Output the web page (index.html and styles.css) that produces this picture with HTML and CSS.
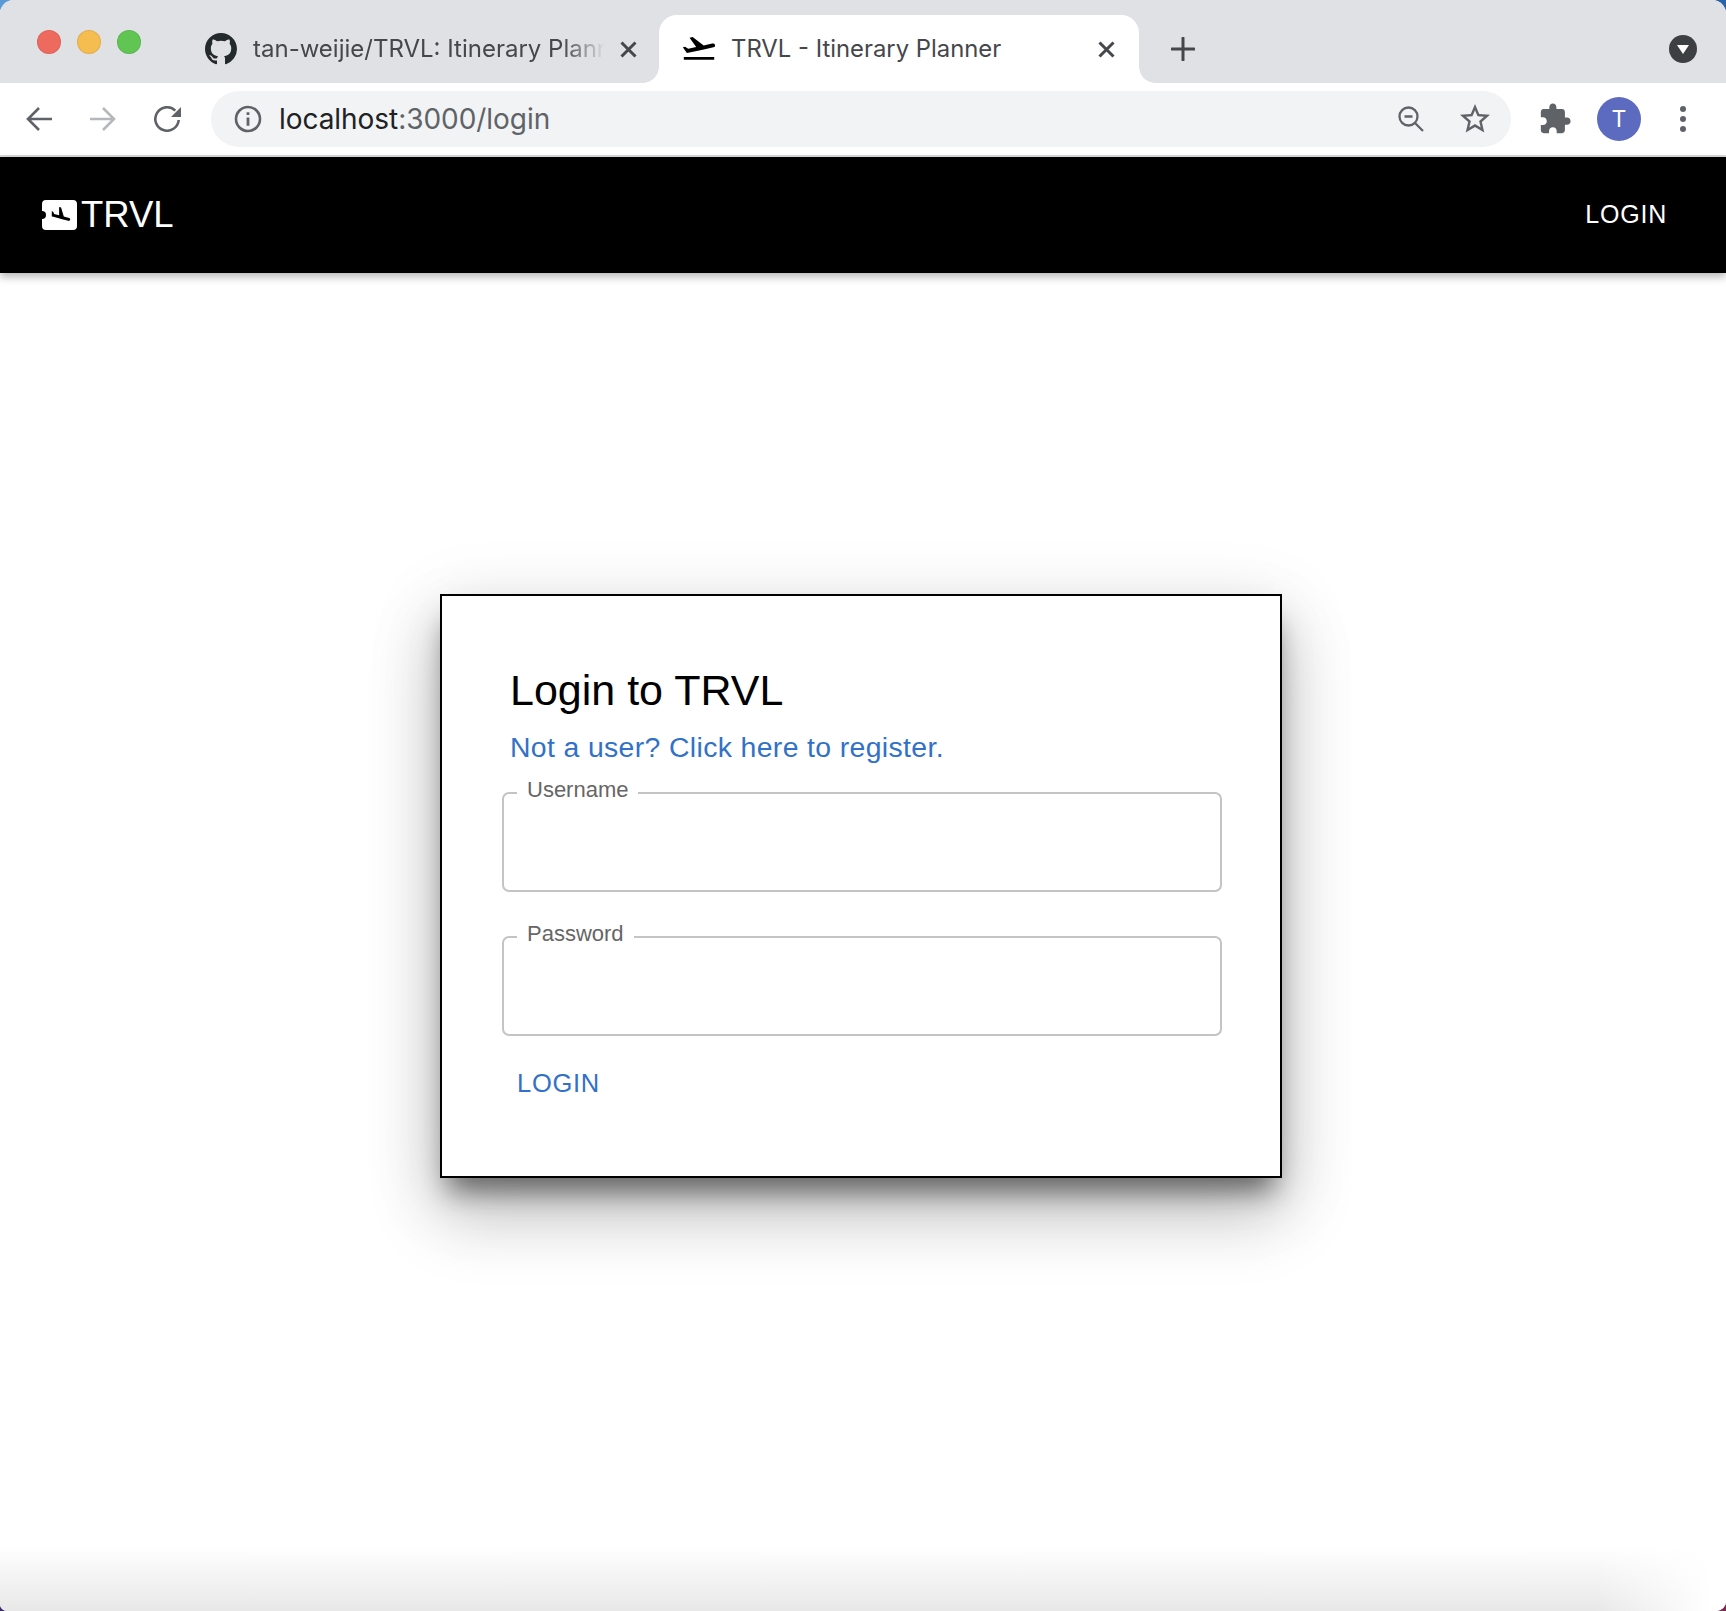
FILE: index.html
```html
<!DOCTYPE html>
<html lang="en">
<head>
  <meta charset="UTF-8" />
  <title>TRVL - Itinerary Planner</title>
  <link rel="stylesheet" href="styles.css">
</head>
<body>

  <div class="window">

    <div class="tab-strip">
      <div class="lights">
        <span class="light red"></span>
        <span class="light yellow"></span>
        <span class="light green"></span>
      </div>

      <div class="tab">
        <svg class="favicon-gh" viewBox="0 0 16 16"><path d="M8 0C3.58 0 0 3.58 0 8c0 3.54 2.29 6.53 5.47 7.59.4.07.55-.17.55-.38 0-.19-.01-.82-.01-1.49-2.01.37-2.53-.49-2.69-.94-.09-.23-.48-.94-.82-1.13-.28-.15-.68-.52-.01-.53.63-.01 1.08.58 1.23.82.72 1.21 1.87.87 2.33.66.07-.52.28-.87.51-1.07-1.78-.2-3.64-.89-3.64-3.95 0-.87.31-1.59.82-2.15-.08-.2-.36-1.02.08-2.12 0 0 .67-.21 2.2.82.64-.18 1.32-.27 2-.27.68 0 1.36.09 2 .27 1.53-1.04 2.2-.82 2.2-.82.44 1.1.16 1.92.08 2.12.51.56.82 1.27.82 2.15 0 3.07-1.87 3.75-3.65 3.95.29.25.54.73.54 1.48 0 1.07-.01 1.93-.01 2.2 0 .21.15.46.55.38A8.013 8.013 0 0016 8c0-4.42-3.58-8-8-8z"/></svg>
        <span class="tab-title fade">tan-weijie/TRVL: Itinerary Planner</span>
        <svg class="tab-close" viewBox="0 0 17 17"><path d="M1.5 1.5l14 14M15.5 1.5l-14 14"/></svg>
      </div>

      <div class="tab active">
        <svg class="favicon-plane" viewBox="2 2 20 20" preserveAspectRatio="none"><path d="M2.5 19h19v2h-19zm19.57-9.36c-.21-.8-1.04-1.28-1.84-1.06L14.92 10l-6.9-6.43-1.93.51 4.14 7.17-4.97 1.33-1.97-1.54-1.45.39 1.82 3.16.77 1.33 1.6-.43 5.31-1.42 4.35-1.16L21 11.49c.81-.23 1.28-1.05 1.07-1.85z"/></svg>
        <span class="tab-title">TRVL - Itinerary Planner</span>
        <svg class="tab-close" viewBox="0 0 17 17"><path d="M1.5 1.5l14 14M15.5 1.5l-14 14"/></svg>
      </div>

      <svg class="new-tab" viewBox="0 0 24 24"><path d="M12 1v22M1 12h22"/></svg>

      <div class="tab-search">
        <svg viewBox="0 0 28 28"><circle cx="14" cy="14" r="14"/><path class="tri" d="M8 10h12l-6 9z"/></svg>
      </div>
    </div>

    <div class="toolbar">
      <svg class="nav-arrow" viewBox="0 0 26 24"><path d="M26 12H2M13 1L2 12l11 11"/></svg>
      <svg class="nav-arrow" viewBox="0 0 26 24"><path class="off" d="M0 12h24M13 1l11 11-11 11"/></svg>
      <svg class="reload" viewBox="0 0 28 26"><path class="reload-arc" d="M21.3 4.7A11.7 11.7 0 1 0 24.7 14"/><path class="reload-head" d="M27 1v10H17z"/></svg>

      <div class="omnibox">
        <svg class="info" viewBox="0 0 28 28"><circle class="ring" cx="14" cy="14" r="12"/><path d="M12.6 12.4h2.8v8.4h-2.8zM12.6 7.2h2.8V10h-2.8z"/></svg>
        <span class="url">localhost<span class="url-dim">:3000/login</span></span>
        <svg class="omni-zoom" viewBox="0 0 26 26"><circle cx="10.5" cy="10.5" r="9"/><path d="M6.5 10.5h8M17 17l8 8"/></svg>
        <svg class="omni-star" viewBox="0 0 24 24"><path d="M22 9.24l-7.19-.62L12 2 9.19 8.63 2 9.24l5.46 4.73L5.82 21 12 17.27 18.18 21l-1.63-7.03L22 9.24zM12 15.4l-3.76 2.27 1-4.28-3.32-2.88 4.38-.38L12 6.1l1.71 4.04 4.38.38-3.32 2.88 1 4.28L12 15.4z"/></svg>
      </div>

      <svg class="puzzle" viewBox="0 0 24 24"><path d="M20.5 11H19V7c0-1.1-.9-2-2-2h-4V3.5C13 2.12 11.88 1 10.5 1S8 2.12 8 3.5V5H4c-1.1 0-1.99.9-1.99 2v3.8H3.5c1.49 0 2.7 1.21 2.7 2.7s-1.21 2.7-2.7 2.7H2V20c0 1.1.9 2 2 2h3.8v-1.5c0-1.49 1.21-2.7 2.7-2.7 1.49 0 2.7 1.21 2.7 2.7V22H17c1.1 0 2-.9 2-2v-4h1.5c1.38 0 2.5-1.12 2.5-2.5S21.88 11 20.5 11z"/></svg>
      <div class="avatar">T</div>
      <div class="menu-dots"><span></span><span></span><span></span></div>
    </div>

    <header class="app-bar">
      <a class="brand" href="#">
        <svg class="brand-icon" viewBox="0 0 35 30">
          <path class="ticket" d="M4 0h27a4 4 0 0 1 4 4v22a4 4 0 0 1-4 4H4a4 4 0 0 1-4-4v-7a4 4 0 0 0 0-8V4a4 4 0 0 1 4-4z"/>
          <path class="ticket-plane" transform="translate(7 5)" d="M9.68 13.27l4.35 1.16 5.31 1.42c.8.21 1.62-.26 1.84-1.06.21-.8-.26-1.62-1.06-1.84l-5.31-1.42-2.76-9.02L10.12 2v8.28L5.15 8.95l-.93-2.32-1.45-.39v5.17l1.6.43 5.31 1.43z"/>
        </svg>
        <span class="brand-name">TRVL</span>
      </a>
      <a class="bar-login" href="#">LOGIN</a>
    </header>

    <main class="content">
      <form class="login-card">
        <h1 class="login-title">Login to TRVL</h1>
        <a class="register-link" href="#">Not a user? Click here to register.</a>

        <div class="field">
          <label class="field-label" for="username">Username</label>
          <input class="field-input" type="text" id="username" />
        </div>

        <div class="field">
          <label class="field-label" for="password">Password</label>
          <input class="field-input" type="password" id="password" />
        </div>

        <button class="login-btn" type="button">LOGIN</button>
      </form>
    </main>

  </div>

</body>
</html>
```

FILE: styles.css
```css
:root {
  --strip: #dfe1e5;
  --omni: #f1f3f4;
  --icon: #5f6368;
  --tab-text: #45474b;
  --blue: #3271c8;
}

* {
  box-sizing: border-box;
}

body {
  margin: 0;
  width: 1726px;
  height: 1611px;
  overflow: hidden;
  background:
    linear-gradient(to right, #5b9bd5 50%, #2a64a8 50%) top / 100% 50% no-repeat,
    linear-gradient(to right, #3a2a6a 50%, #7b2a50 50%) bottom / 100% 50% no-repeat;
  font-family: "Liberation Sans", Arial, sans-serif;
}

.window {
  height: 100%;
  display: flex;
  flex-direction: column;
  overflow: hidden;
  border-radius: 14px 14px 10px 7px;
  background: #fff;
}

/* browser chrome */

.tab-strip {
  flex: none;
  height: 83px;
  display: flex;
  align-items: flex-start;
  background: var(--strip);
  font-family: Inter, "Liberation Sans", sans-serif;
}

.lights {
  display: flex;
  gap: 16px;
  margin: 30px 0 0 37px;
}

.light {
  width: 24px;
  height: 24px;
  border-radius: 50%;
  box-shadow: inset 0 0 0 1px rgba(0, 0, 0, 0.08);
}

.red { background: #ee6a5f; }
.yellow { background: #f5bd4f; }
.green { background: #61c554; }

.tab {
  position: relative;
  width: 454px;
  height: 68px;
  margin: 15px 0 0 64px;
  display: flex;
  align-items: center;
  gap: 16px;
  padding-right: 19px;
}

.tab.active {
  width: 480px;
  margin-left: 0;
  padding: 0 21px 0 24px;
  background: #fff;
  border-radius: 18px 18px 0 0;
}

.tab.active::before,
.tab.active::after {
  content: "";
  position: absolute;
  bottom: 0;
  width: 16px;
  height: 16px;
}

.tab.active::before {
  left: -16px;
  background: radial-gradient(circle at 0 0, transparent 15.5px, #fff 16px);
}

.tab.active::after {
  right: -16px;
  background: radial-gradient(circle at 100% 0, transparent 15.5px, #fff 16px);
}

.favicon-gh {
  flex: none;
  width: 32px;
  height: 32px;
  fill: #24292e;
}

.favicon-plane {
  flex: none;
  width: 32px;
  height: 26px;
  margin-top: -3px;
  fill: #000;
}

.tab-title {
  flex: 1;
  overflow: hidden;
  white-space: nowrap;
  font-size: 24px;
  color: var(--tab-text);
  margin-top: -2px;
}

.tab .fade {
  margin: -2px -4px 0 0;
  -webkit-mask-image: linear-gradient(to right, #000 88%, transparent 100%);
  mask-image: linear-gradient(to right, #000 88%, transparent 100%);
}

.tab.active .tab-title {
  font-size: 23.85px;
}

.tab-close {
  flex: none;
  width: 17px;
  height: 17px;
  margin: 0 3px;
  fill: none;
  stroke: var(--tab-text);
  stroke-width: 3;
}

.new-tab {
  flex: none;
  width: 24px;
  height: 24px;
  margin: 37px 0 0 32px;
  fill: none;
  stroke: var(--tab-text);
  stroke-width: 3;
  stroke-linecap: round;
}

.tab-search {
  margin: 35px 29px 0 auto;
  line-height: 0;
}

.tab-search svg {
  width: 28px;
  height: 28px;
  fill: #3c4043;
}

.tab-search .tri {
  fill: #fff;
}

.toolbar {
  flex: none;
  height: 74px;
  padding: 8px 0 8px 26px;
  display: flex;
  align-items: center;
  border-bottom: 2px solid #d9d9d9;
  background: #fff;
  font-family: Inter, "Liberation Sans", sans-serif;
}

.nav-arrow {
  flex: none;
  width: 26px;
  height: 24px;
  margin-right: 38px;
  fill: none;
  stroke: var(--icon);
  stroke-width: 2.6;
}

.nav-arrow .off {
  stroke: #b5b7ba;
}

.reload {
  flex: none;
  width: 28px;
  height: 26px;
}

.reload-arc {
  fill: none;
  stroke: var(--icon);
  stroke-width: 2.6;
}

.reload-head {
  fill: var(--icon);
}

.omnibox {
  flex: none;
  width: 1300px;
  height: 56px;
  margin-left: 29px;
  display: flex;
  align-items: center;
  border-radius: 28px;
  background: var(--omni);
}

.info {
  flex: none;
  width: 28px;
  height: 28px;
  margin-left: 23px;
  fill: var(--icon);
}

.info .ring {
  fill: none;
  stroke: var(--icon);
  stroke-width: 2.6;
}

.url {
  margin-left: 17px;
  font-size: 28px;
  letter-spacing: -0.05px;
  color: #202124;
}

.url-dim {
  color: var(--icon);
}

.omni-zoom {
  flex: none;
  width: 26px;
  height: 26px;
  margin-left: auto;
  margin-right: 5px;
  fill: none;
  stroke: var(--icon);
  stroke-width: 2.3;
}

.omni-star {
  flex: none;
  width: 36px;
  height: 36px;
  margin: 0 18px 0 28px;
  fill: var(--icon);
}

.puzzle {
  flex: none;
  width: 34px;
  height: 34px;
  margin-left: 27px;
  fill: var(--icon);
}

.avatar {
  flex: none;
  width: 44px;
  height: 44px;
  margin-left: 25px;
  display: flex;
  align-items: center;
  justify-content: center;
  border-radius: 50%;
  background: #5c6bc0;
  color: #fff;
  font-size: 23px;
}

.menu-dots {
  flex: none;
  margin-left: 39px;
  display: flex;
  flex-direction: column;
  gap: 4px;
}

.menu-dots span {
  width: 6px;
  height: 6px;
  border-radius: 50%;
  background: var(--icon);
}

/* app */

.app-bar {
  position: relative;
  flex: none;
  height: 116px;
  padding: 0 59px 0 42px;
  display: flex;
  align-items: center;
  justify-content: space-between;
  background: #000;
  box-shadow: 0 4px 8px rgba(0, 0, 0, 0.28);
}

.brand {
  display: flex;
  align-items: center;
  gap: 4px;
  color: #fff;
  text-decoration: none;
}

.brand-icon {
  width: 35px;
  height: 30px;
}

.ticket {
  fill: #fff;
}

.ticket-plane {
  fill: #000;
}

.brand-name {
  font-size: 36.5px;
  line-height: 40px;
}

.bar-login {
  margin-top: -2px;
  font-size: 25px;
  letter-spacing: 0.8px;
  color: #fff;
  text-decoration: none;
}

.content {
  flex: 1;
  padding: 321px 0 0 440px;
  background:
    linear-gradient(to left, #fff 15px, transparent 130px),
    linear-gradient(to top, #e8e8e8, #fff 65px);
}

.login-card {
  width: 842px;
  padding: 69px 58px 62px 60px;
  border: 2px solid #000;
  background: #fff;
  box-shadow:
    0 21px 26px -8px rgba(0, 0, 0, 0.5),
    0 36px 66px 2px rgba(0, 0, 0, 0.2),
    0 16px 70px 8px rgba(0, 0, 0, 0.08);
}

.login-title {
  margin: 0 0 14px 8px;
  font-size: 43px;
  font-weight: 400;
  line-height: 50px;
  color: #000;
}

.register-link {
  display: block;
  margin: 0 0 27px 8px;
  font-size: 28.4px;
  line-height: 36px;
  letter-spacing: 0.36px;
  color: var(--blue);
  text-decoration: none;
}

.field {
  position: relative;
  height: 100px;
  margin-bottom: 44px;
  border: 2px solid #c4c4c4;
  border-radius: 7px;
}

.field-label {
  position: absolute;
  top: -16px;
  left: 13px;
  padding: 0 10px;
  background: #fff;
  font-size: 22px;
  line-height: 24px;
  color: #666;
}

.field-input {
  width: 100%;
  height: 100%;
  padding: 0 24px;
  border: none;
  outline: none;
  background: transparent;
  font-size: 28px;
}

.login-btn {
  display: block;
  margin: -28px 0 0 1px;
  padding: 14px;
  border: none;
  background: none;
  font-family: inherit;
  font-size: 25.5px;
  line-height: 34px;
  letter-spacing: 0.7px;
  color: var(--blue);
  cursor: pointer;
}
```
